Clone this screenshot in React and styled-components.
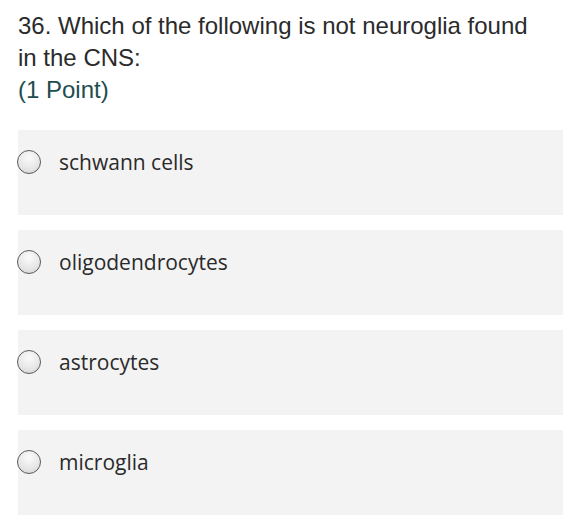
import React from "react";
import styled, { createGlobalStyle } from "styled-components";

const GlobalStyle = createGlobalStyle`
  html, body {
    margin: 0;
    padding: 0;
    background: #ffffff;
  }
`;

const options = ["schwann cells", "oligodendrocytes", "astrocytes", "microglia"];

export default function App() {
  return (
    <Page>
      <GlobalStyle />
      <Question>
        <QuestionTitle>36. Which of the following is not neuroglia found in the CNS:</QuestionTitle>
        <Points>(1 Point)</Points>
      </Question>
      <OptionList>
        {options.map((label) => (
          <OptionRow key={label}>
            <Radio />
            <OptionLabel>{label}</OptionLabel>
          </OptionRow>
        ))}
      </OptionList>
    </Page>
  );
}

const Page = styled.div`
  width: 563px;
  height: 520px;
  overflow: hidden;
  padding: 10px 0 0 18px;
  box-sizing: border-box;
`;

const Question = styled.div`
  font-family: "Liberation Sans", Arial, sans-serif;
  font-size: 24px;
  line-height: 32px;
  padding-right: 20px;
`;

const QuestionTitle = styled.div`
  color: #2b2b2b;
`;

const Points = styled.div`
  color: #1e4d4f;
`;

const OptionList = styled.div`
  display: flex;
  flex-direction: column;
  gap: 15px;
  margin-top: 24px;
`;

const OptionRow = styled.div`
  display: flex;
  align-items: flex-start;
  gap: 18px;
  height: 85px;
  box-sizing: border-box;
  padding-top: 19px;
  background: #f3f3f3;
`;

const Radio = styled.span`
  flex: none;
  width: 24px;
  height: 24px;
  margin-left: -1px;
  margin-top: 1px;
  border-radius: 50%;
  border: 1.5px solid #5a5a5a;
  box-sizing: border-box;
  background: radial-gradient(circle at 50% 30%, #fbfbfb 0%, #e6e6e6 60%, #cfcfcf 100%);
`;

const OptionLabel = styled.span`
  font-family: "Open Sans", "Noto Sans", sans-serif;
  font-size: 21px;
  line-height: 26px;
  color: #2a2a2a;
`;
